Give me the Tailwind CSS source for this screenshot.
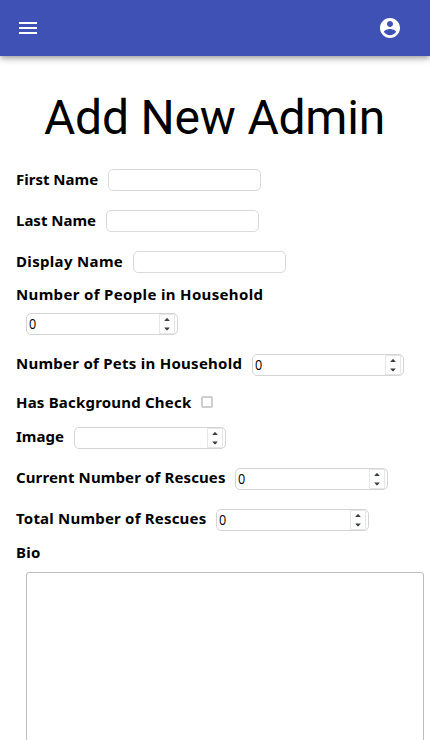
<!DOCTYPE html>
<html lang="en">
<head>
<meta charset="utf-8">
<title>Add New Admin</title>
<script src="https://cdn.jsdelivr.net/npm/@tailwindcss/browser@4"></script>
</head>
<body class="h-[740px] overflow-hidden bg-white text-black font-['Noto_Sans',sans-serif]">
<svg class="hidden">
  <symbol id="spin" viewBox="0 0 18 20">
    <path d="M.5 .5h15v19H.5z" fill="#fff" stroke="#e6e6e6"/>
    <path d="M5.2 7 7.5 4.3h1L10.8 7zM5.2 13.6h5.6L8.5 16.3h-1z" fill="#3a3f42"/>
  </symbol>
</svg>
<header class="flex h-14 items-center justify-between bg-[#3f51b5] pl-4 pr-7 text-white shadow-[0_2px_4px_-1px_rgba(0,0,0,0.2),0_4px_5px_0_rgba(0,0,0,0.14),0_1px_10px_0_rgba(0,0,0,0.12)]">
  <svg class="size-6" viewBox="0 0 24 24" fill="currentColor"><path d="M3 18h18v-2H3v2zm0-5h18v-2H3v2zm0-7v2h18V6H3z"/></svg>
  <svg class="size-6" viewBox="0 0 24 24" fill="currentColor"><path d="M12 2C6.48 2 2 6.48 2 12s4.48 10 10 10 10-4.48 10-10S17.52 2 12 2zm0 3c1.66 0 3 1.34 3 3s-1.34 3-3 3-3-1.34-3-3 1.34-3 3-3zm0 14.2c-2.5 0-4.71-1.28-6-3.22.03-1.99 4-3.08 6-3.08 1.99 0 5.97 1.09 6 3.08-1.29 1.94-3.5 3.22-6 3.22z"/></svg>
</header>
<h1 class="mt-[34px] h-[69px] pr-px text-center font-['Roboto',sans-serif] text-[48px] leading-[56px] tracking-[-0.2px]">Add New Admin</h1>
<form class="pl-4 text-[15px] leading-[22px] font-bold whitespace-nowrap">
  <div class="flex h-[41px] items-center">
    <label class="w-[92px] shrink-0 pb-[2px]">First Name</label>
    <div class="h-[22px] w-[153px] rounded-[5px] border border-[#dadada]"></div>
  </div>
  <div class="flex h-[41px] items-center">
    <label class="w-[90px] shrink-0 pb-[2px]">Last Name</label>
    <div class="h-[22px] w-[153px] rounded-[5px] border border-[#dadada]"></div>
  </div>
  <div class="flex h-[41px] items-center">
    <label class="w-[117px] shrink-0 pb-[2px] tracking-[0.33px]">Display Name</label>
    <div class="h-[22px] w-[153px] rounded-[5px] border border-[#dadada]"></div>
  </div>
  <label class="block h-[21px] pt-px tracking-[0.34px]">Number of People in Household</label>
  <div class="flex h-[41px] items-center pl-[10px]">
    <div class="flex h-[22px] w-[152px] items-center justify-between rounded-[5px] border border-[#d4d4d4] pl-[2px] font-['Open_Sans',sans-serif] text-sm font-normal"><span class="origin-left scale-x-90">0</span><svg class="h-5 w-[18px]"><use href="#spin"/></svg></div>
  </div>
  <div class="flex h-[41px] items-center">
    <label class="w-[236px] shrink-0 pb-[3px] tracking-[0.26px]">Number of Pets in Household</label>
    <div class="flex h-[22px] w-[152px] items-center justify-between rounded-[5px] border border-[#d4d4d4] pl-[2px] font-['Open_Sans',sans-serif] text-sm font-normal"><span class="origin-left scale-x-90">0</span><svg class="h-5 w-[18px]"><use href="#spin"/></svg></div>
  </div>
  <div class="flex h-8 items-center">
    <label class="w-[185px] shrink-0 pt-[2px] tracking-[0.2px]">Has Background Check</label>
    <div class="mt-[2px] size-3 rounded-[2px] border-2 border-[#cecece]"></div>
  </div>
  <div class="flex h-[41px] items-center">
    <label class="w-[58px] shrink-0 pb-[3px]">Image</label>
    <div class="flex h-[22px] w-[152px] items-center justify-end rounded-[5px] border border-[#d4d4d4]"><svg class="h-5 w-[18px]"><use href="#spin"/></svg></div>
  </div>
  <div class="flex h-[41px] items-center">
    <label class="w-[219px] shrink-0 pb-[3px] tracking-[0.12px]">Current Number of Rescues</label>
    <div class="flex h-[22px] w-[153px] items-center justify-between rounded-[5px] border border-[#d4d4d4] pl-[2px] font-['Open_Sans',sans-serif] text-sm font-normal"><span class="origin-left scale-x-90">0</span><svg class="h-5 w-[18px]"><use href="#spin"/></svg></div>
  </div>
  <div class="flex h-[41px] items-center">
    <label class="w-[200px] shrink-0 pb-[3px] tracking-[0.2px]">Total Number of Rescues</label>
    <div class="flex h-[22px] w-[153px] items-center justify-between rounded-[5px] border border-[#d4d4d4] pl-[2px] font-['Open_Sans',sans-serif] text-sm font-normal"><span class="origin-left scale-x-90">0</span><svg class="h-5 w-[18px]"><use href="#spin"/></svg></div>
  </div>
  <label class="block h-[32px] pt-px tracking-[0.3px]">Bio</label>
  <div class="ml-[10px] h-[200px] w-[398px] rounded-[3px] border border-[#bdbdbd]"></div>
</form>
</body>
</html>
